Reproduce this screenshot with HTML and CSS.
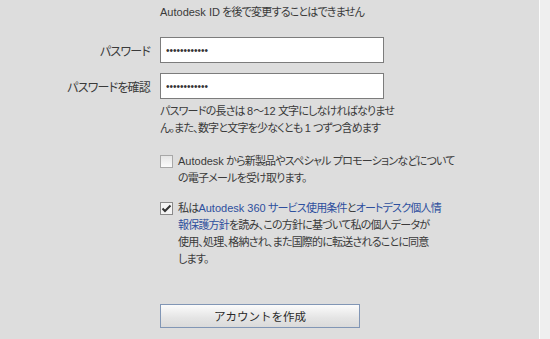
FILE: index.html
```html
<!DOCTYPE html>
<html lang="ja">
<head>
    <meta charset="UTF-8">
    <title>アカウントを作成</title>
    <link rel="stylesheet" href="styles.css">
</head>
<body>
    <div class="page">
        <div class="main">
            <form class="form">
                <p class="field note"><span class="en">Autodesk ID</span> を後で変更することはできません</p>

                <label class="label" for="pw">パスワード</label>
                <input class="field text-input" id="pw" type="password" value="abcdefghijkl">

                <label class="label" for="pw2">パスワードを確認</label>
                <input class="field text-input" id="pw2" type="password" value="abcdefghijkl">

                <p class="field hint">パスワードの長さは <span class="en">8</span>～<span class="en">12</span> 文字にしなければなりませ<br>ん。また、数字と文字を少なくとも <span class="en">1</span> つずつ含めます</p>

                <div class="field check">
                    <span class="box"></span>
                    <p><span class="en">Autodesk</span> から新製品やスペシャル プロモーションなどについて<br>の電子メールを受け取ります。</p>
                </div>

                <div class="field check">
                    <span class="box checked">
                        <svg width="11" height="9" viewBox="0 0 11 9"><path d="M1.5 4.5 L4 7 L9.5 1.5" fill="none" stroke="#333" stroke-width="2"/></svg>
                    </span>
                    <p>私は<a href="#"><span class="en">Autodesk 360</span> サービス使用条件</a>と<a href="#">オートデスク個人情<br>報保護方針</a>を読み、この方針に基づいて私の個人データが<br>使用、処理、格納され、また国際的に転送されることに同意<br>します。</p>
                </div>

                <button class="field submit" type="button">アカウントを作成</button>
            </form>
        </div>
        <div class="edge"></div>
        <div class="side"></div>
    </div>
</body>
</html>
```

FILE: styles.css
```css
body {
    margin: 0;
    font-family: "Liberation Sans", "Noto Sans CJK JP", sans-serif;
    font-size: 11px;
    font-feature-settings: "palt";
    letter-spacing: -0.8px;
    color: #3a3a3a;
}
.en {
    letter-spacing: 0;
}
.page {
    display: flex;
    height: 100vh;
    background: #dddddd;
}
.main {
    width: 539px;
}
.edge {
    width: 1px;
    background: #ffffff;
}
.side {
    flex: 1;
    background: #efefef;
}
.form {
    display: grid;
    grid-template-columns: 150px 224px;
    column-gap: 10px;
    align-items: center;
    padding-top: 4px;
}
.label {
    grid-column: 1;
    text-align: right;
    font-size: 12px;
    margin-bottom: 10px;
}
.field {
    grid-column: 2;
    margin: 0;
}
p {
    margin: 0;
    line-height: 17px;
}
.note {
    margin-bottom: 16px;
}
.text-input {
    box-sizing: border-box;
    width: 224px;
    height: 26px;
    margin-bottom: 10px;
    padding: 0 5px;
    border: 1px solid #7c7c7c;
    background: #fff;
    font-size: 10px;
    letter-spacing: 0;
    color: #333;
    outline: none;
}
.hint {
    margin-top: -6px;
    white-space: nowrap;
}
.check {
    display: flex;
    gap: 5px;
    margin-top: 16px;
    white-space: nowrap;
}
.check + .check {
    margin-top: 13px;
}
.box {
    box-sizing: border-box;
    flex: none;
    width: 13px;
    height: 13px;
    margin-top: 2px;
    border: 1px solid #a8a8a8;
    background: linear-gradient(#e6e6e6, #fbfbfb);
    display: flex;
    align-items: center;
    justify-content: center;
}
.box.checked {
    border-color: #8a8a8a;
    background: #f4f4f4;
}
a {
    color: #2d4f9e;
    text-decoration: none;
}
.submit {
    width: 200px;
    height: 24px;
    margin-top: 36px;
    border: 1px solid #8196b5;
    background: linear-gradient(#fbfbfb, #e4e4e4 60%, #dadada);
    font-family: inherit;
    font-size: 11.5px;
    color: #2a2a2a;
    padding: 0;
}
```
